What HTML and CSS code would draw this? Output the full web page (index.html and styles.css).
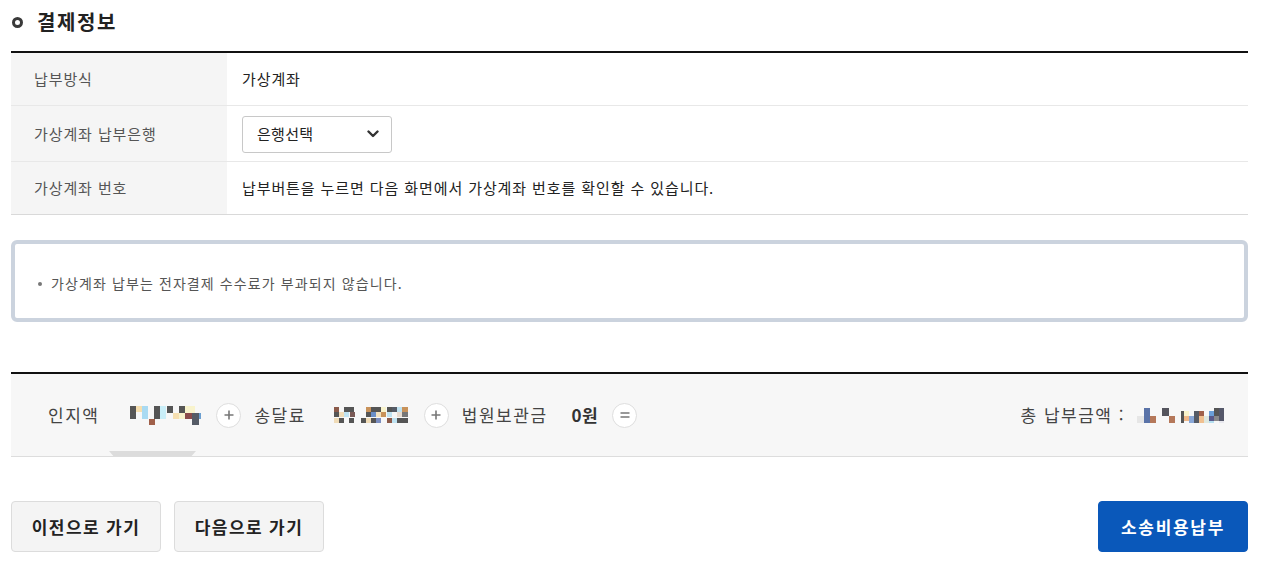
FILE: index.html
```html
<!DOCTYPE html>
<html lang="ko">
<head>
<meta charset="utf-8">
<title>결제정보</title>
<link rel="stylesheet" href="styles.css">
</head>
<body>
<div class="wrap">
  <h2 class="title"><span class="ring"></span>결제정보</h2>

  <div class="info">
    <div class="row r1">
      <div class="th">납부방식</div>
      <div class="td">가상계좌</div>
    </div>
    <div class="row r2">
      <div class="th">가상계좌 납부은행</div>
      <div class="td">
        <div class="select">
          <span>은행선택</span>
          <svg class="chev" width="12" height="8" viewBox="0 0 12 8"><path d="M1.5 1.5 L6 6 L10.5 1.5" fill="none" stroke="#333" stroke-width="2.4" stroke-linecap="round" stroke-linejoin="round"/></svg>
        </div>
      </div>
    </div>
    <div class="row r3">
      <div class="th">가상계좌 번호</div>
      <div class="td">납부버튼을 누르면 다음 화면에서 가상계좌 번호를 확인할 수 있습니다.</div>
    </div>
  </div>

  <div class="notice">
    <ul>
      <li>가상계좌 납부는 전자결제 수수료가 부과되지 않습니다.</li>
    </ul>
  </div>

  <div class="summary">
    <div class="items">
      <span class="lbl l1">인지액</span>
      <svg class="mosaic" width="72" height="19" viewBox="0 0 72 19">
        <rect x="0" y="0" width="6" height="13" fill="#555"/>
        <rect x="6" y="0" width="6" height="6" fill="#f6dfb0"/>
        <rect x="12" y="0" width="6" height="13" fill="#a9daf2"/>
        <rect x="19" y="13" width="6" height="6" fill="#a0604a"/>
        <rect x="24" y="0" width="6" height="13" fill="#555"/>
        <rect x="30" y="0" width="6" height="13" fill="#c9eef8"/>
        <rect x="37" y="0" width="6" height="7" fill="#555"/>
        <rect x="43" y="7" width="6" height="6" fill="#f6dfb0"/>
        <rect x="49" y="0" width="6" height="7" fill="#555"/>
        <rect x="49" y="7" width="6" height="6" fill="#f8f3cc"/>
        <rect x="55" y="0" width="10" height="7" fill="#f8f3cc"/>
        <rect x="55" y="7" width="7" height="6" fill="#8b4b4b"/>
        <rect x="62" y="7" width="7" height="12" fill="#555b66"/>
        <rect x="69" y="7" width="2" height="6" fill="#6b9fd0"/>
      </svg>
      <span class="op">
        <svg width="10" height="10" viewBox="0 0 10 10"><path d="M5 0.5 V9.5 M0.5 5 H9.5" stroke="#777" stroke-width="1.6"/></svg>
      </span>
      <span class="lbl l2">송달료</span>
      <svg class="mosaic" width="76" height="16" viewBox="0 0 76 16">
        <rect x="0" y="0" width="5" height="5" fill="#8b5a4a"/>
        <rect x="0" y="5" width="5" height="5" fill="#555"/>
        <rect x="0" y="11" width="5" height="5" fill="#f0dcb8"/>
        <rect x="5" y="5" width="5" height="5" fill="#f0dcb8"/>
        <rect x="5" y="11" width="5" height="5" fill="#555"/>
        <rect x="10" y="0" width="5" height="5" fill="#555"/>
        <rect x="10" y="5" width="5" height="5" fill="#bfe3f2"/>
        <rect x="15" y="0" width="5" height="5" fill="#555"/>
        <rect x="15" y="11" width="5" height="5" fill="#555"/>
        <rect x="16" y="5" width="5" height="5" fill="#7a5a56"/>
        <rect x="27" y="11" width="5" height="5" fill="#555"/>
        <rect x="32" y="0" width="5" height="5" fill="#c8925a"/>
        <rect x="32" y="5" width="5" height="5" fill="#555"/>
        <rect x="32" y="11" width="5" height="5" fill="#f0dcb8"/>
        <rect x="37" y="0" width="5" height="5" fill="#555"/>
        <rect x="37" y="5" width="5" height="5" fill="#6b8fc8"/>
        <rect x="37" y="11" width="5" height="5" fill="#555"/>
        <rect x="42" y="0" width="5" height="5" fill="#555"/>
        <rect x="42" y="5" width="5" height="5" fill="#f3e2c0"/>
        <rect x="42" y="11" width="5" height="5" fill="#7b8ec0"/>
        <rect x="47" y="0" width="5" height="5" fill="#f8f3cc"/>
        <rect x="47" y="5" width="5" height="5" fill="#c8925a"/>
        <rect x="53" y="0" width="5" height="5" fill="#555"/>
        <rect x="53" y="5" width="5" height="5" fill="#bfe3f2"/>
        <rect x="53" y="11" width="5" height="5" fill="#8b5a4a"/>
        <rect x="58" y="0" width="5" height="5" fill="#555b66"/>
        <rect x="58" y="11" width="5" height="5" fill="#bfe3f2"/>
        <rect x="63" y="0" width="5" height="5" fill="#bfe3f2"/>
        <rect x="63" y="5" width="5" height="5" fill="#e9dcd0"/>
        <rect x="63" y="11" width="5" height="5" fill="#555"/>
        <rect x="68" y="0" width="6" height="5" fill="#c8925a"/>
        <rect x="68" y="5" width="6" height="5" fill="#777"/>
        <rect x="68" y="11" width="6" height="5" fill="#555"/>
      </svg>
      <span class="op">
        <svg width="10" height="10" viewBox="0 0 10 10"><path d="M5 0.5 V9.5 M0.5 5 H9.5" stroke="#777" stroke-width="1.6"/></svg>
      </span>
      <span class="lbl l3">법원보관금</span>
      <span class="val">0원</span>
      <span class="op">
        <svg width="10" height="8" viewBox="0 0 10 8"><path d="M0.5 2 H9.5 M0.5 6 H9.5" stroke="#777" stroke-width="1.6"/></svg>
      </span>
      <span class="total">
        <span class="lbl">총 납부금액 :</span>
        <svg class="mosaic" width="88" height="15" viewBox="0 0 88 15">
          <rect x="0" y="8" width="7" height="7" fill="#e6e6e6"/>
          <rect x="7" y="0" width="6" height="15" fill="#5a73a8"/>
          <rect x="13" y="8" width="6" height="7" fill="#b5785a"/>
          <rect x="25" y="0" width="7" height="8" fill="#55555e"/>
          <rect x="32" y="8" width="6" height="7" fill="#b5785a"/>
          <rect x="44" y="3" width="3" height="12" fill="#555"/>
          <rect x="47" y="3" width="5" height="5" fill="#f8f3cc"/>
          <rect x="47" y="8" width="5" height="5" fill="#f0b888"/>
          <rect x="52" y="8" width="5" height="7" fill="#8aa8d8"/>
          <rect x="57" y="3" width="5" height="12" fill="#555b66"/>
          <rect x="62" y="3" width="5" height="5" fill="#a0604a"/>
          <rect x="62" y="8" width="5" height="7" fill="#f0c090"/>
          <rect x="67" y="8" width="5" height="7" fill="#dde8e0"/>
          <rect x="72" y="3" width="5" height="5" fill="#6b9fd8"/>
          <rect x="72" y="8" width="5" height="5" fill="#5a5a8a"/>
          <rect x="72" y="13" width="5" height="2" fill="#b5e0f0"/>
          <rect x="77" y="0" width="5" height="8" fill="#555"/>
          <rect x="77" y="8" width="5" height="5" fill="#8a8a8a"/>
          <rect x="82" y="0" width="5" height="13" fill="#55586a"/>
          <rect x="82" y="13" width="5" height="2" fill="#e8e8ee"/>
        </svg>
      </span>
    </div>
    <span class="tab"></span>
  </div>

  <div class="buttons">
    <div class="left">
      <button class="btn">이전으로 가기</button>
      <button class="btn">다음으로 가기</button>
    </div>
    <button class="btn primary">소송비용납부</button>
  </div>
</div>
</body>
</html>
```

FILE: styles.css
```css
* { box-sizing: border-box; }
html, body { margin: 0; padding: 0; background: #fff; }
body {
  font-family: "Noto Sans CJK KR", "Noto Sans", sans-serif;
  color: #222;
}
.wrap {
  width: 1248px;
  padding-left: 11px;
}
.title {
  margin: 0;
  padding-top: 8px;
  height: 51px;
  display: flex;
  align-items: flex-start;
  font-size: 20px;
  line-height: 28px;
  font-weight: 700;
  letter-spacing: 1.6px;
  color: #222;
}
.ring {
  width: 11px;
  height: 11px;
  border: 3px solid #3a3a3a;
  border-radius: 50%;
  margin: 9px 14px 0 1px;
}
.info {
  border-top: 2px solid #111;
  border-bottom: 1px solid #d9d9d9;
}
.row {
  display: flex;
  border-bottom: 1px solid #e8e8e8;
  font-size: 15px;
  line-height: 20px;
  letter-spacing: 0.9px;
}
.row:last-child { border-bottom: none; }
.r1 { height: 53px; }
.r2 { height: 56px; }
.r3 { height: 52px; }
.th {
  width: 216px;
  background: #f5f5f5;
  color: #555;
  padding-left: 23px;
  display: flex;
  align-items: center;
}
.td {
  flex: 1;
  padding-left: 15px;
  display: flex;
  align-items: center;
  color: #222;
}
.select {
  width: 150px;
  height: 37px;
  border: 1px solid #c8c8c8;
  border-radius: 3px;
  display: flex;
  align-items: center;
  justify-content: space-between;
  padding: 0 12px 0 14px;
  color: #222;
  margin-top: 1px;
  letter-spacing: 0.3px;
}
.notice {
  margin-top: 25px;
  height: 82px;
  border: 4px solid #cbd3de;
  border-radius: 6px;
  display: flex;
  align-items: center;
  padding-top: 3px;
}
.notice ul {
  margin: 0;
  padding: 0 0 0 23px;
  list-style: none;
}
.notice li {
  position: relative;
  padding-left: 13px;
  font-size: 14px;
  line-height: 20px;
  letter-spacing: 1.1px;
  color: #555;
}
.notice li::before {
  content: "";
  position: absolute;
  left: 0;
  top: 9px;
  width: 4px;
  height: 4px;
  border-radius: 50%;
  background: #777;
}
.summary {
  position: relative;
  margin-top: 50px;
  border-top: 2px solid #111;
  border-bottom: 1px solid #ddd;
  background: #f7f7f7;
  height: 85px;
}
.items {
  height: 82px;
  display: flex;
  align-items: center;
  padding: 0 23px 0 37px;
  font-size: 17px;
  line-height: 24px;
  color: #444;
}
.lbl { color: #444; letter-spacing: 1.5px; }
.l1 { margin-right: 31px; }
.l2 { margin-right: 28px; }
.l3 { margin-right: 24px; }
.mosaic { display: block; flex: none; }
.val {
  font-weight: 700;
  color: #333;
  letter-spacing: 0.5px;
}
.op {
  width: 25px;
  height: 25px;
  border-radius: 50%;
  background: #fff;
  border: 1px solid #dedede;
  display: flex;
  align-items: center;
  justify-content: center;
  margin: 0 13px 0 14px;
  flex: none;
}
.total {
  margin-left: auto;
  display: flex;
  align-items: center;
  gap: 12px;
}
.tab {
  position: absolute;
  left: 98px;
  bottom: 0;
  width: 87px;
  height: 5px;
  background: #dcdcdc;
  clip-path: polygon(0 0, 100% 0, 95% 100%, 5% 100%);
}
.buttons {
  margin-top: 44px;
  display: flex;
  justify-content: space-between;
  width: 1237px;
}
.left { display: flex; gap: 13px; }
.btn {
  width: 150px;
  height: 51px;
  border: 1px solid #dcdcdc;
  border-radius: 4px;
  background: #f4f4f4;
  font-family: "Noto Sans CJK KR", "Noto Sans", sans-serif;
  font-size: 17px;
  font-weight: 700;
  letter-spacing: 1.4px;
  color: #222;
  padding: 0;
}
.btn.primary {
  background: #0a58ba;
  border-color: #0a58ba;
  color: #fff;
  letter-spacing: 1.7px;
}
```
